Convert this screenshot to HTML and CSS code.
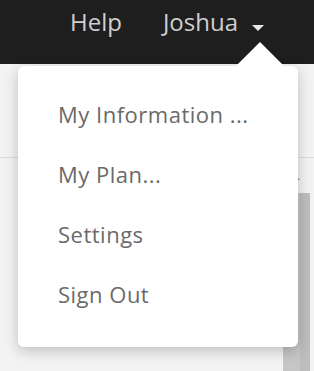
FILE: index.html
```html
<!DOCTYPE html>
<html lang="en">
<head>
    <meta charset="UTF-8">
    <meta name="viewport" content="width=device-width, initial-scale=1.0">
    <title>Account menu</title>
    <link rel="stylesheet" href="styles.css">
</head>
<body>
    <div class="page">
        <header class="topbar">
            <a class="nav-link" href="#">Help</a>
            <a class="nav-link user" href="#">Joshua <span class="caret"></span></a>
        </header>

        <div class="backdrop">
            <div class="rule"></div>
            <div class="scroll-tip"></div>
            <div class="scroll-bar"></div>
        </div>

        <ul class="menu">
            <li><a href="#">My Information ...</a></li>
            <li><a href="#">My Plan...</a></li>
            <li><a href="#">Settings</a></li>
            <li><a href="#">Sign Out</a></li>
        </ul>
    </div>
</body>
</html>
```

FILE: styles.css
```css
body {
    margin: 0;
    font-family: "Open Sans", "Noto Sans", sans-serif;
    background: #f3f3f3;
}
.page {
    position: relative;
    width: 314px;
    height: 371px;
    overflow: hidden;
}
.topbar {
    display: flex;
    justify-content: flex-end;
    align-items: flex-start;
    height: 64px;
    padding: 6px 50px 0 0;
    box-sizing: border-box;
    background: #1e1e1e;
}
.nav-link {
    color: #cfcfcf;
    text-decoration: none;
    font-size: 24px;
    line-height: 32px;
}
.nav-link + .nav-link {
    margin-left: 41px;
}
.user {
    display: flex;
    align-items: flex-start;
}
.caret {
    width: 0;
    height: 0;
    margin: 19px 0 0 14px;
    border-left: 6px solid transparent;
    border-right: 6px solid transparent;
    border-top: 6px solid #e6e6e6;
}
.backdrop {
    display: flex;
    flex-direction: column;
    align-items: flex-end;
    padding-right: 4px;
}
.rule {
    align-self: stretch;
    margin: 93px -4px 0 0;
    height: 1px;
    background: #dcdcdc;
}
.scroll-tip {
    margin: 17px 10px 0 0;
    width: 0;
    height: 0;
    border-left: 5px solid #8a8a8a;
    border-top: 5px solid transparent;
}
.scroll-bar {
    margin-top: 13px;
    width: 27px;
    height: 180px;
    background: linear-gradient(to right, #c6c6c6 0 17px, #bdbdbd 17px);
}
.menu {
    position: absolute;
    left: 18px;
    top: 66px;
    width: 280px;
    height: 281px;
    box-sizing: border-box;
    margin: 0;
    padding: 18px 0 0 40px;
    list-style: none;
    background: #fff;
    border-radius: 6px;
    box-shadow: 0 4px 14px rgba(0, 0, 0, 0.22);
}
.menu::before {
    content: "";
    position: absolute;
    left: 225px;
    top: -17px;
    width: 34px;
    height: 34px;
    background: #fff;
    transform: rotate(45deg);
}
.menu li {
    position: relative;
    line-height: 60px;
    font-size: 22px;
    letter-spacing: 0.5px;
}
.menu a {
    color: #6a6a6a;
    text-decoration: none;
}
```
